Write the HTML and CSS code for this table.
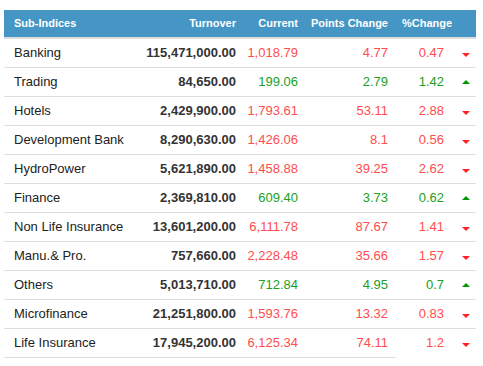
FILE: index.html
```html
<!DOCTYPE html>
<html lang="en">
<head>
    <meta charset="UTF-8">
    <title>Sub-Indices</title>
    <link rel="stylesheet" href="styles.css">
</head>
<body>
    <div class="wrap">
        <table class="indices">
            <colgroup>
                <col class="c-name">
                <col class="c-turn">
                <col class="c-cur">
                <col class="c-pts">
                <col class="c-pct">
                <col class="c-dir">
            </colgroup>
            <thead>
                <tr>
                    <th class="left">Sub-Indices</th>
                    <th>Turnover</th>
                    <th>Current</th>
                    <th>Points Change</th>
                    <th class="pct-head" colspan="2">%Change</th>
                </tr>
            </thead>
            <tbody>
                <tr class="down">
                    <td class="name">Banking</td>
                    <td class="turn">115,471,000.00</td>
                    <td>1,018.79</td>
                    <td>4.77</td>
                    <td>0.47</td>
                    <td class="dir"><span class="arrow"></span></td>
                </tr>
                <tr class="up">
                    <td class="name">Trading</td>
                    <td class="turn">84,650.00</td>
                    <td>199.06</td>
                    <td>2.79</td>
                    <td>1.42</td>
                    <td class="dir"><span class="arrow"></span></td>
                </tr>
                <tr class="down">
                    <td class="name">Hotels</td>
                    <td class="turn">2,429,900.00</td>
                    <td>1,793.61</td>
                    <td>53.11</td>
                    <td>2.88</td>
                    <td class="dir"><span class="arrow"></span></td>
                </tr>
                <tr class="down">
                    <td class="name">Development Bank</td>
                    <td class="turn">8,290,630.00</td>
                    <td>1,426.06</td>
                    <td>8.1</td>
                    <td>0.56</td>
                    <td class="dir"><span class="arrow"></span></td>
                </tr>
                <tr class="down">
                    <td class="name">HydroPower</td>
                    <td class="turn">5,621,890.00</td>
                    <td>1,458.88</td>
                    <td>39.25</td>
                    <td>2.62</td>
                    <td class="dir"><span class="arrow"></span></td>
                </tr>
                <tr class="up">
                    <td class="name">Finance</td>
                    <td class="turn">2,369,810.00</td>
                    <td>609.40</td>
                    <td>3.73</td>
                    <td>0.62</td>
                    <td class="dir"><span class="arrow"></span></td>
                </tr>
                <tr class="down">
                    <td class="name">Non Life Insurance</td>
                    <td class="turn">13,601,200.00</td>
                    <td>6,111.78</td>
                    <td>87.67</td>
                    <td>1.41</td>
                    <td class="dir"><span class="arrow"></span></td>
                </tr>
                <tr class="down">
                    <td class="name">Manu.&amp; Pro.</td>
                    <td class="turn">757,660.00</td>
                    <td>2,228.48</td>
                    <td>35.66</td>
                    <td>1.57</td>
                    <td class="dir"><span class="arrow"></span></td>
                </tr>
                <tr class="up">
                    <td class="name">Others</td>
                    <td class="turn">5,013,710.00</td>
                    <td>712.84</td>
                    <td>4.95</td>
                    <td>0.7</td>
                    <td class="dir"><span class="arrow"></span></td>
                </tr>
                <tr class="down">
                    <td class="name">Microfinance</td>
                    <td class="turn">21,251,800.00</td>
                    <td>1,593.76</td>
                    <td>13.32</td>
                    <td>0.83</td>
                    <td class="dir"><span class="arrow"></span></td>
                </tr>
                <tr class="down last">
                    <td class="name">Life Insurance</td>
                    <td class="turn">17,945,200.00</td>
                    <td>6,125.34</td>
                    <td>74.11</td>
                    <td>1.2</td>
                    <td class="dir"><span class="arrow"></span></td>
                </tr>
            </tbody>
        </table>
    </div>
</body>
</html>
```

FILE: styles.css
```css
body {
    margin: 0;
    background: #fff;
    font-family: 'Liberation Sans', Arial, sans-serif;
    color: #333;
}

.wrap {
    padding: 10px 7px 0 4px;
}

.indices {
    width: 472px;
    border-collapse: collapse;
    table-layout: fixed;
}

.c-name { width: 136px; }
.c-turn { width: 104px; }
.c-cur  { width: 62px; }
.c-pts  { width: 90px; }
.c-pct  { width: 56px; }
.c-dir  { width: 24px; }

.indices th {
    background-color: #4596c5;
    color: #fff;
    font-size: 11px;
    font-weight: bold;
    line-height: 17px;
    padding: 5px 8px 5px 0;
    text-align: right;
    border-bottom: 2px solid #ddd;
    white-space: nowrap;
}

.indices th.left {
    text-align: left;
    padding-left: 10px;
}

.indices th.pct-head {
    text-align: left;
    padding-left: 6px;
}

.indices td {
    font-size: 13px;
    line-height: 18px;
    padding: 5px 8px 5px 0;
    text-align: right;
    border-bottom: 1px solid #ddd;
    white-space: nowrap;
}

.indices td.name {
    text-align: left;
    padding-left: 10px;
    color: #222;
}

.indices td.turn {
    font-weight: bold;
    color: #333;
}

.indices td.dir {
    text-align: left;
    padding: 5px 0 5px 10px;
}

.down td { color: #ff4d4d; }
.up td { color: #22a022; }

.last td:nth-child(5),
.last td:nth-child(6) {
    border-bottom: none;
}

.arrow {
    display: inline-block;
    width: 0;
    height: 0;
    border-left: 4px solid transparent;
    border-right: 4px solid transparent;
    vertical-align: middle;
}

.down .arrow {
    border-top: 4px solid #ff2222;
    margin-top: 2px;
}

.up .arrow {
    border-bottom: 4px solid #009900;
    margin-top: -1px;
}
```
